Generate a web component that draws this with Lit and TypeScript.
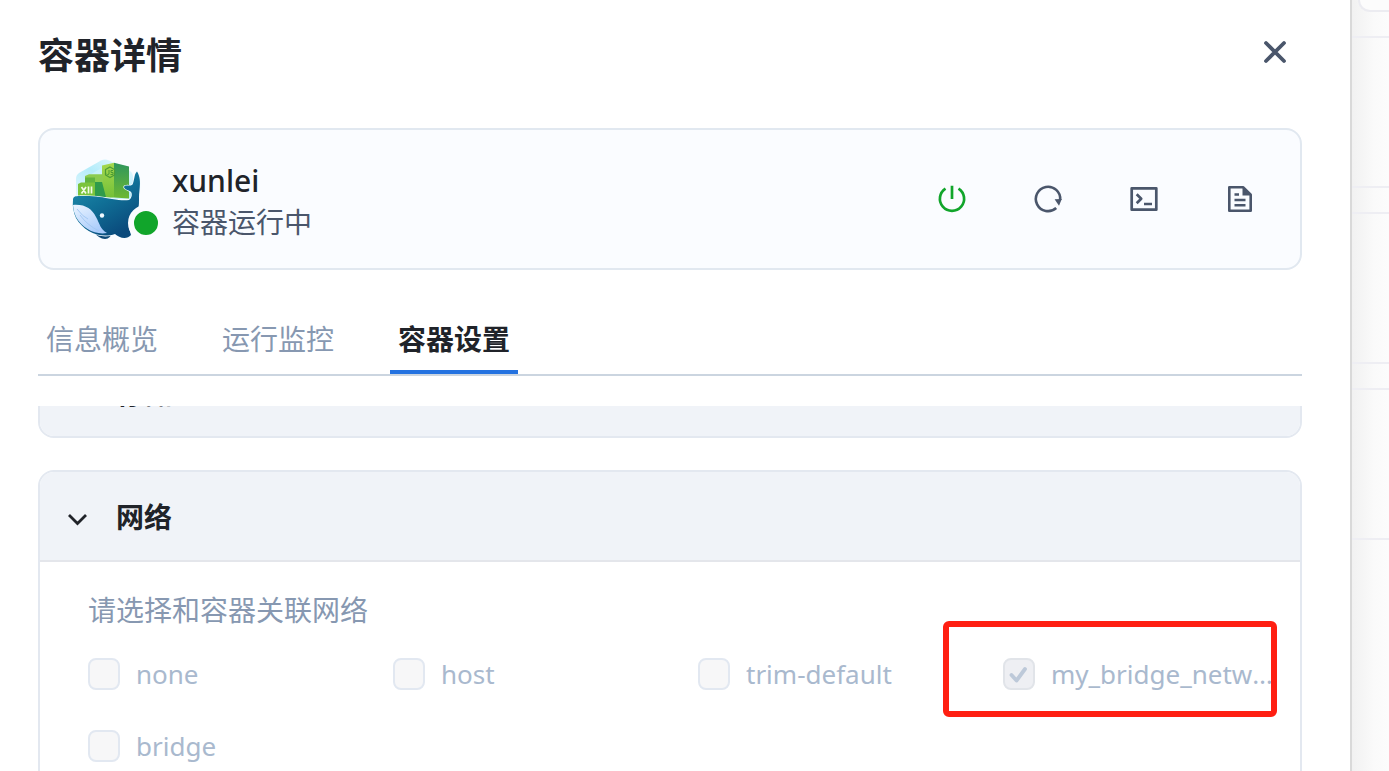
import { LitElement, html, css, svg } from "lit";
import { customElement, state } from "lit/decorators.js";

const whale = svg`
<svg class="whale" viewBox="0 -2 80 84" aria-hidden="true">
  <defs>
    <linearGradient id="body" x1="0" y1="0" x2="0.6" y2="1"><stop offset="0" stop-color="#2296b4"/><stop offset="0.55" stop-color="#106f96"/><stop offset="1" stop-color="#0a4a7c"/></linearGradient>
    <linearGradient id="belly" x1="0" y1="0" x2="0.6" y2="1"><stop offset="0" stop-color="#eaf4ff"/><stop offset="1" stop-color="#a9cbfb"/></linearGradient>
    <linearGradient id="tall" x1="0" y1="0" x2="0" y2="1"><stop offset="0" stop-color="#a5d84e"/><stop offset="1" stop-color="#74c038"/></linearGradient>
    <linearGradient id="dark" x1="0" y1="0" x2="0" y2="1"><stop offset="0" stop-color="#2f965c"/><stop offset="1" stop-color="#6db832"/></linearGradient>
    <linearGradient id="ice" x1="0" y1="1" x2="1" y2="0"><stop offset="0" stop-color="#e8f8fe"/><stop offset="0.5" stop-color="#b4ecfa"/><stop offset="1" stop-color="#eefaff"/></linearGradient>
  </defs>
  <path d="M4 20Q4 16 7 14L29 1.500Q33 -0.500 37 1.500L58 12Q61 14 61 18V40H4Z" fill="url(#ice)"/>
  <path d="M9 21L33 7L57 20V40H9Z" fill="#c9f2fb"/>
  <path d="M30 6.500L42 3.800V38.500H30Z" fill="url(#tall)"/>
  <path d="M42 3.800L57 7.500V39.500L42 38.500Z" fill="url(#dark)"/>
  <path d="M13 17L17 15.300H31V23H13Z" fill="#8ccc50"/>
  <path d="M13 18.500H23V26H13Z" fill="#61b43f"/>
  <path d="M6 25L9 23.500H23V37.500H6Z" fill="#7bc43c"/>
  <path d="M23 23H30L34 38H23Z" fill="#2f9b4b"/>
  <path d="M38 8L42.500 10.500V16L38 18.500L33.500 16V10.500Z" fill="none" stroke="#4c9c35" stroke-width="1.200"/>
  <path d="M37 11v4q-1.500 1.500-2.500 0M41 11.500h-2v2h2v2h-2.500" fill="none" stroke="#4c9c35"/>
  <path d="M9.500 28L14 34.500M14 28L9.500 34.500M16.500 27.500V34.500M19.500 27.500V34.500" stroke="#f3fbe7" stroke-width="1.700"/>
  <path d="M21 72Q27 80 33 80Q39 80 40 72Z" fill="#0b4775"/>
  <path d="M1 41C1 37.500 3 37 8 37C22 36.500 30 38 40 40C47 41.300 53 41.500 57 41C60 39 60.500 35 59 33C57 31 52 30.500 52 28C53 25 58 28 60.500 25.500C62.500 22 62 15 65 12.500C68 17 68.500 23 67.500 31C66.500 37 67.500 43 66.500 49C64.500 59 61 65 57 69L59 76C55 81 47 79 43 75C29 80 12 73 4 59Q0 50 1 41Z" fill="url(#body)" stroke="#f4fbff" stroke-width="1.400" paint-order="stroke"/>
  <path d="M1 46C13 45 20 50 24 58C28 65 28 70 35 74C23 76 11 70 4 58Q1 52 1 46Z" fill="url(#belly)"/>
  <path d="M8 56Q15 66 27 72M5 50Q11 58 16 60" fill="none" stroke="#a4c9f4"/>
  <circle cx="30" cy="56.500" r="2.200" fill="#f0faff"/>
</svg>`;

const powerIcon = svg`<svg class="icon" viewBox="0 0 32 32" fill="none" stroke="currentColor" stroke-width="2.700" aria-hidden="true"><path d="M16 2.800V16M9.500 5.600A12.100 12.100 0 1 0 22.500 5.600"/></svg>`;
const restartIcon = svg`<svg class="icon" viewBox="0 0 32 32" fill="none" stroke="currentColor" stroke-width="2.600" aria-hidden="true"><path d="M24.200 25A12.200 12.200 0 1 1 28.200 17"/><path d="M22.600 16.200L29.800 16L27 22.800Z" fill="currentColor" stroke="none"/></svg>`;
const terminalIcon = svg`<svg class="icon" viewBox="0 0 32 32" fill="none" stroke="currentColor" stroke-width="2.700" stroke-linejoin="round" aria-hidden="true"><rect x="3.700" y="5.300" width="24.600" height="21.400"/><path d="M8.700 11.300L13.200 15.800L8.700 20.300M16 21H24"/></svg>`;
const logIcon = svg`<svg class="icon" viewBox="0 0 32 32" fill="none" stroke="currentColor" stroke-width="2.600" stroke-linejoin="round" aria-hidden="true"><path d="M5.300 4.300H19.300L26.700 11.700V27.700H5.300Z"/><path d="M18.500 4L27 12.500H18.500Z" fill="currentColor" stroke="none"/><path d="M10.500 11.500H15M10.500 17H21.500M10.500 22.300H21.500"/></svg>`;
const closeIcon = svg`<svg class="icon" viewBox="0 0 30 30" fill="none" stroke="currentColor" stroke-width="3.800" stroke-linecap="round" aria-hidden="true"><path d="M6 6L24 24M24 6L6 24"/></svg>`;
const chevronIcon = svg`<svg class="chevron" viewBox="0 0 24 24" fill="none" stroke="currentColor" stroke-width="2.800" aria-hidden="true"><path d="M3 10L11.500 18.500L20 10"/></svg>`;

@customElement("app-root")
export class AppRoot extends LitElement {
  @state() private activeTab = "容器设置";
  private tabs = ["信息概览", "运行监控", "容器设置"];
  private networks = [
    { name: "none", joined: false },
    { name: "host", joined: false },
    { name: "trim-default", joined: false },
    { name: "my_bridge_network", joined: true, marked: true },
    { name: "bridge", joined: false },
  ];

  static styles = css`
    :host {
      display: grid;
      grid-template-columns: minmax(0, 1fr) 39px;
      height: 100vh;
      overflow: hidden;
      background: #fff;
      color: #202329;
      font: 400 28px/40px "Noto Sans", "Noto Sans CJK SC", sans-serif;
    }
    * { box-sizing: border-box; }
    h1, h2, p { margin: 0; }
    button { font: inherit; color: inherit; background: none; border: 0; padding: 0; cursor: pointer; }
    .icon { display: block; width: 32px; height: 32px; }
    .drawer { display: flex; flex-direction: column; min-height: 0; padding: 28px 48px 0 38px; }
    .top { display: flex; justify-content: space-between; align-items: flex-start; height: 100px; }
    h1 { font-size: 36px; line-height: 56px; font-weight: 700; }
    .close { color: #4a566b; margin: 9px 12px 0 0; }
    .close .icon { width: 30px; height: 30px; }
    .summary { display: flex; align-items: center; height: 142px; flex: none; padding: 0 44px 0 32px; border: 2px solid #e1e8f0; border-radius: 16px; background: #fafcff; }
    .avatar { position: relative; width: 80px; height: 84px; margin-right: 20px; }
    .whale { display: block; width: 80px; height: 84px; }
    .status { position: absolute; right: -12px; bottom: 0; width: 36px; height: 36px; border: 6px solid #fafcff; border-radius: 50%; background: #11a52b; }
    .who { flex: 1; padding-top: 4px; }
    .name { font-size: 30px; font-weight: 500; line-height: 42px; }
    .state { color: #4a566b; line-height: 40px; }
    .actions { display: flex; gap: 64px; color: #4a566b; }
    .power { color: #11a52b; }
    .tabs { display: flex; flex: none; gap: 48px; height: 76px; margin-top: 30px; border-bottom: 2px solid #cbd5e0; }
    .tab { padding: 8px 8px 0; color: #8798b1; border-bottom: 4px solid transparent; }
    .tab.active { color: #202329; font-weight: 700; border-color: #2472e0; }
    .scroll { flex: 1; min-height: 0; overflow: hidden; margin-top: 30px; }
    .section { border: 2px solid #e3e8f0; border-radius: 16px; overflow: hidden; }
    .section + .section { margin-top: 32px; }
    .scrolled { margin-top: -60px; }
    .head { display: flex; align-items: center; gap: 26px; width: 100%; height: 88px; padding: 2px 26px 0; background: #f0f3f8; text-align: left; }
    h2 { font-size: 28px; line-height: 40px; font-weight: 700; }
    .chevron { display: block; width: 24px; height: 24px; }
    .body { padding: 28px 24px 40px 48px; border-top: 2px solid #e4e6eb; }
    fieldset { border: 0; margin: 0; padding: 0; min-width: 0; }
    legend { padding: 0; color: #8798b1; }
    .grid { display: grid; grid-template-columns: repeat(4, minmax(0, 1fr)); gap: 32px; padding-top: 24px; }
    .choice { position: relative; display: flex; align-items: center; gap: 16px; height: 40px; color: #a9b9ce; font-size: 26px; }
    .choice input { appearance: none; flex: none; width: 32px; height: 32px; margin: 0; border: 2px solid #e2e8f1; border-radius: 8px; background: #f7f7f8; }
    .choice input:checked { border-color: #e1e4e9; background: #eeeff3; }
    .tick { position: absolute; left: 0; top: 4px; width: 32px; height: 32px; color: #bdc9d9; pointer-events: none; }
    .label { min-width: 0; overflow: hidden; white-space: nowrap; text-overflow: ellipsis; }
    .marker { position: absolute; inset: -33px -1px -23px -60px; border: 6px solid #ff1f12; border-radius: 6px; pointer-events: none; }
    .behind { display: flex; flex-direction: column; overflow: hidden; border-left: 2px solid #d9d9d9; background: linear-gradient(90deg, #f1f1f1, #fafafa 60%, #fcfcfc); }
    .chip { flex: none; height: 12px; margin-left: 6px; border: solid #ececf1; border-width: 0 0 2px 2px; border-radius: 0 0 0 12px; background: #fcfcfc; }
    .row { flex: none; height: 152px; border: solid #eeeef3; border-width: 2px 0; }
    .row + .row { margin-top: 24px; }
    .chip + .row { margin-top: 24px; }
  `;

  render() {
    return html`
      <main class="drawer">
        <header class="top">
          <h1>容器详情</h1>
          <button class="close" aria-label="关闭">${closeIcon}</button>
        </header>
        <section class="summary">
          <div class="avatar">${whale}<span class="status"></span></div>
          <div class="who">
            <div class="name">xunlei</div>
            <div class="state">容器运行中</div>
          </div>
          <div class="actions">
            <button class="power" aria-label="停止">${powerIcon}</button>
            <button aria-label="重启">${restartIcon}</button>
            <button aria-label="终端">${terminalIcon}</button>
            <button aria-label="日志">${logIcon}</button>
          </div>
        </section>
        <nav class="tabs" role="tablist">
          ${this.tabs.map((t) => html`
            <button role="tab" class="tab ${t === this.activeTab ? "active" : ""}" aria-selected=${t === this.activeTab}
              @click=${() => (this.activeTab = t)}>${t}</button>`)}
        </nav>
        <div class="scroll">
          <section class="section scrolled">
            <button class="head">${chevronIcon}<h2>存储</h2></button>
          </section>
          <section class="section">
            <button class="head" aria-expanded="true">${chevronIcon}<h2>网络</h2></button>
            <div class="body">
              <fieldset>
                <legend>请选择和容器关联网络</legend>
                <div class="grid">
                  ${this.networks.map((n) => html`
                    <label class="choice">
                      <input type="checkbox" disabled .checked=${n.joined} />
                      ${n.joined ? svg`<svg class="tick" viewBox="0 0 32 32" fill="none" stroke="currentColor" stroke-width="3.800" stroke-linecap="round" stroke-linejoin="round" aria-hidden="true"><path d="M8.500 17L13.500 22.500L22 11"/></svg>` : ""}
                      <span class="label">${n.name}</span>
                      ${n.marked ? html`<span class="marker"></span>` : ""}
                    </label>`)}
                </div>
              </fieldset>
            </div>
          </section>
        </div>
      </main>
      <aside class="behind" aria-hidden="true">
        <div class="chip"></div>
        <div class="row"></div>
        <div class="row"></div>
        <div class="row"></div>
      </aside>
    `;
  }
}
